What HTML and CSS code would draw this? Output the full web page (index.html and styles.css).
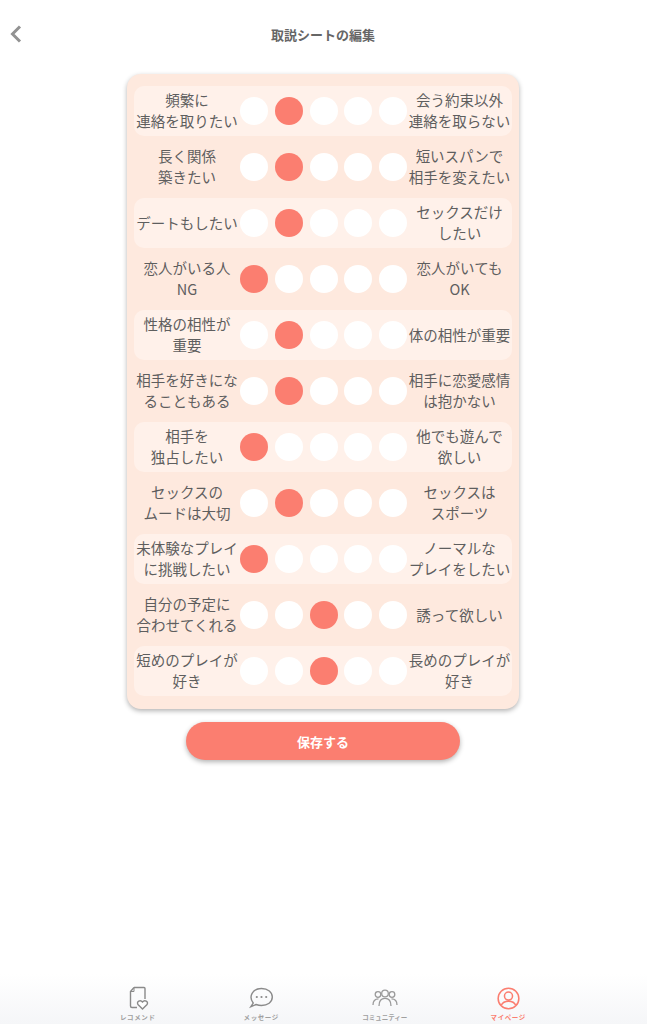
FILE: index.html
```html
<!DOCTYPE html>
<html lang="ja">
<head>
<meta charset="utf-8">
<title>取説シートの編集</title>
<link rel="stylesheet" href="styles.css">
</head>
<body>
<div class="app">
  <header class="header">
    <svg class="back" viewBox="0 0 14 20" width="14" height="20"><path d="M11 2.5 L3.5 10 L11 17.5" fill="none" stroke="#929292" stroke-width="3"/></svg>
    <h1 class="title">取説シートの編集</h1>
  </header>
  <main class="main">
    <section class="card">
      <div class="row"><div class="label">頻繁に<br>連絡を取りたい</div><div class="dots"><i class="dot"></i><i class="dot on"></i><i class="dot"></i><i class="dot"></i><i class="dot"></i></div><div class="label">会う約束以外<br>連絡を取らない</div></div>
      <div class="row"><div class="label">長く関係<br>築きたい</div><div class="dots"><i class="dot"></i><i class="dot on"></i><i class="dot"></i><i class="dot"></i><i class="dot"></i></div><div class="label">短いスパンで<br>相手を変えたい</div></div>
      <div class="row"><div class="label">デートもしたい</div><div class="dots"><i class="dot"></i><i class="dot on"></i><i class="dot"></i><i class="dot"></i><i class="dot"></i></div><div class="label">セックスだけ<br>したい</div></div>
      <div class="row"><div class="label">恋人がいる人<br>NG</div><div class="dots"><i class="dot on"></i><i class="dot"></i><i class="dot"></i><i class="dot"></i><i class="dot"></i></div><div class="label">恋人がいても<br>OK</div></div>
      <div class="row"><div class="label">性格の相性が<br>重要</div><div class="dots"><i class="dot"></i><i class="dot on"></i><i class="dot"></i><i class="dot"></i><i class="dot"></i></div><div class="label">体の相性が重要</div></div>
      <div class="row"><div class="label">相手を好きにな<br>ることもある</div><div class="dots"><i class="dot"></i><i class="dot on"></i><i class="dot"></i><i class="dot"></i><i class="dot"></i></div><div class="label">相手に恋愛感情<br>は抱かない</div></div>
      <div class="row"><div class="label">相手を<br>独占したい</div><div class="dots"><i class="dot on"></i><i class="dot"></i><i class="dot"></i><i class="dot"></i><i class="dot"></i></div><div class="label">他でも遊んで<br>欲しい</div></div>
      <div class="row"><div class="label">セックスの<br>ムードは大切</div><div class="dots"><i class="dot"></i><i class="dot on"></i><i class="dot"></i><i class="dot"></i><i class="dot"></i></div><div class="label">セックスは<br>スポーツ</div></div>
      <div class="row"><div class="label">未体験なプレイ<br>に挑戦したい</div><div class="dots"><i class="dot on"></i><i class="dot"></i><i class="dot"></i><i class="dot"></i><i class="dot"></i></div><div class="label">ノーマルな<br>プレイをしたい</div></div>
      <div class="row"><div class="label">自分の予定に<br>合わせてくれる</div><div class="dots"><i class="dot"></i><i class="dot"></i><i class="dot on"></i><i class="dot"></i><i class="dot"></i></div><div class="label">誘って欲しい</div></div>
      <div class="row"><div class="label">短めのプレイが<br>好き</div><div class="dots"><i class="dot"></i><i class="dot"></i><i class="dot on"></i><i class="dot"></i><i class="dot"></i></div><div class="label">長めのプレイが<br>好き</div></div>
    </section>
    <button class="save" type="button">保存する</button>
  </main>
  <nav class="tabbar">
    <div class="tab">
      <svg viewBox="0 0 24 24" width="24" height="24" fill="none" stroke="#8a8a8a" stroke-width="1.4"><path d="M8 1.5 H18 Q19 1.5 19 2.5 V13 M8 1.5 L4.5 5.5 V20 Q4.5 21.5 6 21.5 H11"/><path d="M8 1.5 V5.5 H4.5" stroke-width="1"/><path d="M16.5 23 L12 18.5 C10 15.5 14.5 13.5 16.5 16 C18.5 13.5 23 15.5 21 18.5 Z" fill="#fff"/></svg>
      <span>レコメンド</span>
    </div>
    <div class="tab">
      <svg viewBox="0 0 24 24" width="24" height="24" fill="none" stroke="#8a8a8a" stroke-width="1.4"><path d="M4.2 17 C-0.8 10.5 3.5 2.5 12.5 2.5 C19 2.5 23.3 6.5 23.3 11 C23.3 16.2 18.5 19.5 12.5 19.5 C10.2 19.5 8.5 19 7 18.5 L1.8 20.8 Z"/><circle cx="7.8" cy="11" r="1.1" fill="#8a8a8a" stroke="none"/><circle cx="12.5" cy="11" r="1.1" fill="#8a8a8a" stroke="none"/><circle cx="17.2" cy="11" r="1.1" fill="#8a8a8a" stroke="none"/></svg>
      <span>メッセージ</span>
    </div>
    <div class="tab">
      <svg viewBox="0 0 26 24" width="26" height="24" fill="none" stroke="#9a9a9a" stroke-width="1.3"><circle cx="6" cy="8.5" r="2.8"/><circle cx="20" cy="8.5" r="2.8"/><circle cx="13" cy="7.5" r="3.3"/><path d="M1 19 C1 14.5 3 12.8 6.5 12.8"/><path d="M25 19 C25 14.5 23 12.8 19.5 12.8"/><path d="M7 20 C7 14.5 9.5 12.3 13 12.3 C16.5 12.3 19 14.5 19 20"/></svg>
      <span class="tight">コミュニティー</span>
    </div>
    <div class="tab active">
      <svg viewBox="0 0 24 24" width="23" height="23" fill="none" stroke="#fb7e70" stroke-width="1.6"><circle cx="12" cy="12" r="10.8"/><circle cx="12" cy="9.5" r="4.2"/><path d="M4.5 19 C6 15.5 9 14.8 12 14.8 C15 14.8 18 15.5 19.5 19"/></svg>
      <span>マイページ</span>
    </div>
  </nav>
</div>
</body>
</html>
```
FILE: styles.css
```css
* { box-sizing: border-box; }
html, body { margin: 0; padding: 0; }
body {
  background: #fff;
  font-family: "Noto Sans CJK JP", "Noto Sans", sans-serif;
  color: #666;
}
.app {
  width: 647px;
  height: 1024px;
  display: flex;
  flex-direction: column;
  overflow: hidden;
}
.header {
  height: 74px;
  flex: none;
  display: flex;
  justify-content: center;
  padding: 25px 1px 0 0;
  position: relative;
}
.back { position: absolute; left: 9px; top: 24px; }
.title {
  margin: 0;
  font-size: 13px;
  line-height: 20px;
  font-weight: 700;
  color: #666;
}
.main {
  flex: 1;
  display: flex;
  flex-direction: column;
  align-items: center;
  padding-right: 1px;
}
.card {
  width: 392px;
  height: 635px;
  padding: 12px 7px 14px;
  background: #fee9de;
  border-radius: 14px;
  box-shadow: 0 2px 5px rgba(0, 0, 0, .3);
  display: flex;
  flex-direction: column;
  gap: 6px;
}
.row {
  height: 50px;
  flex: none;
  display: flex;
  align-items: center;
  border-radius: 10px;
}
.row:nth-child(odd) { background: #fff1ea; }
.label {
  width: 106px;
  flex: none;
  padding-bottom: 2px;
  text-align: center;
  font-size: 14.5px;
  line-height: 21px;
  white-space: nowrap;
  font-weight: 400;
  color: #5e5e5e;
}
.label:last-child { width: 105px; }
.dots {
  flex: 1;
  display: flex;
  justify-content: space-between;
}
.dot {
  width: 28px;
  height: 28px;
  border-radius: 50%;
  background: #fff;
  display: block;
}
.dot.on { background: #fb7e70; }
.save {
  margin-top: 13px;
  width: 274px;
  height: 38px;
  border: 0;
  border-radius: 19px;
  background: #fb7e70;
  color: #fff;
  font: 700 13px/38px "Noto Sans CJK JP", sans-serif;
  box-shadow: 0 2px 5px rgba(0, 0, 0, .3);
}
.tabbar {
  height: 50px;
  flex: none;
  display: grid;
  grid-template-columns: repeat(4, 123.5px);
  justify-content: center;
  padding-right: 1px;
  background: linear-gradient(#fff, #f5f6f8);
}
.tab {
  display: flex;
  flex-direction: column;
  align-items: center;
  justify-content: flex-end;
  gap: 3px;
  padding-bottom: 3px;
}
.tab span {
  font-size: 6.5px;
  line-height: 8px;
  font-weight: 700;
  color: #a0a0a0;
  letter-spacing: .6px;
}
.tab span.tight { letter-spacing: 0; }
.tab.active span { color: #fb7e70; }
```
